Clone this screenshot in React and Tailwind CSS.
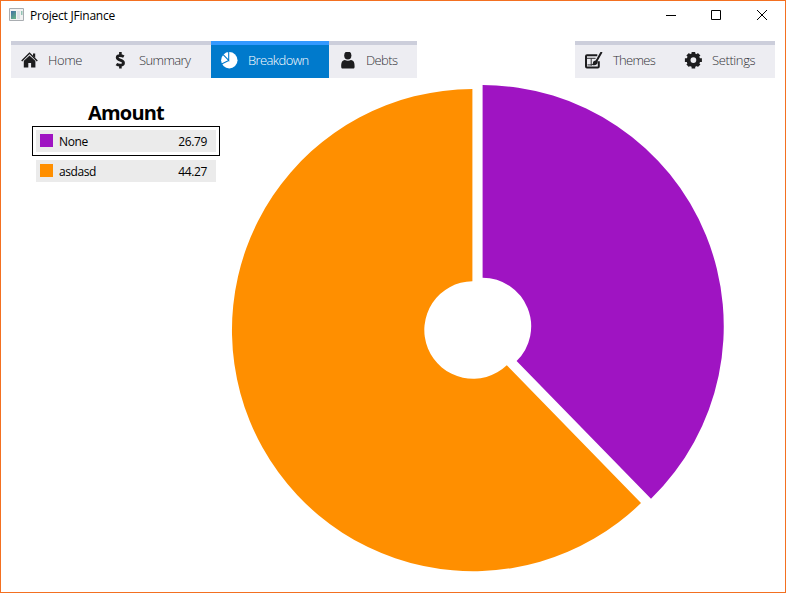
import React from "react";

const HomeIcon = () => (
  <svg width="18" height="18" viewBox="0 0 18 18" fill="#1d1d1f">
    <path d="M8.5 3.6 2.8 8.6v6.9h4.5v-4.6h2.8v4.6h4.3V8.6z" />
    <path d="M.7 8.9 8.5 1.3l7.8 7.6" fill="none" stroke="#1d1d1f" strokeWidth="1.4" />
    <path d="M2.3 9 8.5 3l6.2 6" fill="none" stroke="#ededf2" strokeWidth=".45" />
    <path d="M12 1.6h2.2v4.4L12 3.9z" />
  </svg>
);

const DollarIcon = () => (
  <svg width="18" height="18" viewBox="0 0 18 18" fill="none" stroke="#1d1d1f">
    <path d="M12.8 4.6C11.2 3.7 6.2 2.7 6.2 5.5c0 3 6.3 2.3 6.3 5.4 0 3-5.3 2.4-7.1 1.2" strokeWidth="2.8" />
    <path d="M9.4 0v3M9.4 13.4v3.1" strokeWidth="2.6" />
  </svg>
);

const BreakdownIcon = () => (
  <svg width="18" height="18" viewBox="0 0 18 18">
    <circle cx="9.3" cy="8.2" r="8.2" fill="#fff" />
    <path d="M8.7 0v8.4L2.9 2.3M8.7 8.4.6 12.6" fill="none" stroke="#007acc" strokeWidth="1.1" />
  </svg>
);

const PersonIcon = () => (
  <svg width="18" height="18" viewBox="0 0 18 18" fill="#1d1d1f">
    <ellipse cx="8.8" cy="3.5" rx="3.6" ry="4" />
    <path d="M5.9 7.9C2.8 8.5 2.2 10.7 2.2 14.4c0 1.6.5 2.1 1.8 2.1h9.8c1.3 0 1.8-.5 1.8-2.1 0-3.7-.6-5.9-3.7-6.5-1.6 1.1-4.4 1.1-6 0z" />
  </svg>
);

const ThemesIcon = () => (
  <svg width="18" height="18" viewBox="0 0 18 18" fill="none" stroke="#1d1d1f">
    <path d="M12.3 3.2H2q-1 0-1 1v10.4q0 1 1 1h10.8q1 0 1-1V9.2" strokeWidth="2" />
    <path d="M2 6.3h8.6M6.2 6.5v7M2.5 12.9h4.5" strokeWidth=".9" />
    <path d="m16.3.6-4.8 8.3" strokeWidth="2" strokeLinecap="round" />
    <path d="M11.5 8.4c-2.5-.2-3.6 1-3.5 2.3.1.9-.4 1.4-1.3 2.1 3 1.3 6.2.1 6.1-3.3z" fill="#1d1d1f" stroke="none" />
  </svg>
);

const GearIcon = () => (
  <svg width="18" height="18" viewBox="0 0 18 18" fill="none" stroke="#1d1d1f">
    <circle cx="9.4" cy="8.1" r="4.9" strokeWidth="4" />
    <path
      d="M9.4 0v3M9.4 13.5v3M.9 8.1h3M14.9 8.1h3M3.65 2.35l2 2M13.15 11.85l2 2M15.15 2.35l-2 2M5.65 11.85l-2 2"
      strokeWidth="3.6"
    />
  </svg>
);

function Tab({ icon, label, width, tracking, iconPad = "pl-[10px]", gap = "gap-[10px]", active = false }) {
  return (
    <button
      className={`flex h-[37px] items-center border-t-4 pb-px text-left text-[13px] leading-none ${width} ${iconPad} ${gap} ${
        active ? "border-[#3399ff] bg-[#007acc] text-white" : "border-[#cccedb] bg-[#ededf2] text-[#333338]"
      }`}
    >
      {icon}
      <span className={`whitespace-nowrap pb-px font-light ${tracking}`}>{label}</span>
    </button>
  );
}

function LegendRow({ color, label, value, selected = false }) {
  return (
    <div className={`h-[30px] w-[188px] border p-[3px] ${selected ? "border-black" : "border-transparent"}`}>
      <div className="flex h-[22px] items-start bg-[#ebebeb] pr-[9px] pl-1 text-[12px] leading-[22px] text-black">
        <span className={`mt-1 h-[13px] w-[13px] ${color}`} />
        <span className="ml-[6px] flex-1 pt-px tracking-[-0.4px]">{label}</span>
        <span className="pt-px tracking-[-0.35px]">{value}</span>
      </div>
    </div>
  );
}

export default function App() {
  return (
    <div className="flex h-[593px] w-[786px] flex-col overflow-hidden border border-[#f37021] bg-white font-['Segoe_UI','Open_Sans','Noto_Sans',sans-serif]">
      <header className="flex h-[40px] items-start">
        <div className="flex items-start gap-[6px] pt-[5px] pl-2">
          <svg width="15" height="18" viewBox="0 0 15 18">
            <defs>
              <linearGradient id="pane" x1="0" y1="0" x2="0.6" y2="1">
                <stop offset="0" stopColor="#3f6fa5" />
                <stop offset="1" stopColor="#63ad88" />
              </linearGradient>
            </defs>
            <path d="M.5 2.5h14v12H.5z" fill="#f2f2f2" stroke="#a9adb1" />
            <path d="M2 5h5v8H2z" fill="url(#pane)" />
            <path d="M8 5h3v8H8z" fill="#dce2e6" />
            <path d="M12 5h1.5v4H12z" fill="#94c4b4" />
          </svg>
          <h1 className="pt-px text-[12px] leading-[18px] tracking-[-0.22px] text-black">Project JFinance</h1>
        </div>
        <svg className="mt-[8px] mr-[17px] ml-auto" width="102" height="12" viewBox="0 0 102 12" fill="none" stroke="#000" strokeWidth="1">
          <path d="M0 6.5h10M45.5 1.5h9v9h-9z" />
          <path d="m91 1 10 10M101 1 91 11" />
        </svg>
      </header>

      <nav className="flex justify-between pr-[10px] pl-[10px]">
        <div className="flex">
          <Tab icon={<HomeIcon />} label="Home" width="w-[90px]" tracking="tracking-[-0.4px]" gap="gap-[9px]" />
          <Tab icon={<DollarIcon />} label="Summary" width="w-[110px]" tracking="tracking-[-0.6px]" />
          <Tab icon={<BreakdownIcon />} label="Breakdown" width="w-[118px]" tracking="tracking-[-0.6px]" iconPad="pl-[9px]" active />
          <Tab icon={<PersonIcon />} label="Debts" width="w-[88px]" tracking="tracking-[-0.6px]" gap="gap-[9px]" />
        </div>
        <div className="flex">
          <Tab icon={<ThemesIcon />} label="Themes" width="w-[100px]" tracking="tracking-[-0.7px]" />
          <Tab icon={<GearIcon />} label="Settings" width="w-[100px]" tracking="tracking-[-0.4px]" iconPad="pl-[9px]" />
        </div>
      </nav>

      <main className="flex flex-1">
        <aside className="w-[219px] pt-[21px] pl-[31px]">
          <h2 className="h-[27px] w-[188px] text-center text-[20px] leading-[28px] font-bold tracking-[-0.8px] text-black">Amount</h2>
          <LegendRow color="bg-[#9f14c2]" label="None" value="26.79" selected />
          <LegendRow color="bg-[#ff8f00]" label="asdasd" value="44.27" />
        </aside>
        <svg width="560" height="514" viewBox="220 78 560 514">
          <path d="M482.6 85.1A241.1 241.1 0 0 1 651 498.8L516.6 361A48.6 48.6 0 0 0 482.6 277.7Z" fill="#9f14c2" />
          <path d="M641 503.1A241.1 241.1 0 1 1 472.4 89V281.2A48.8 48.8 0 1 0 506.8 365.3Z" fill="#ff8f00" />
        </svg>
      </main>
    </div>
  );
}
